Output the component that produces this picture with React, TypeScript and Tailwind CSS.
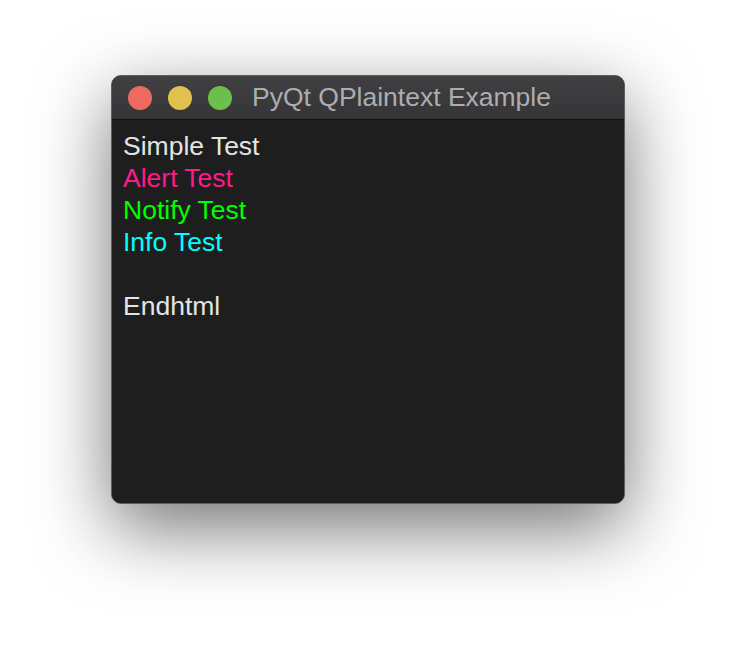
import React from "react";

const lines = [
  { text: "Simple Test", color: "text-[#e4e4e4]" },
  { text: "Alert Test", color: "text-[#ff1a8c]" },
  { text: "Notify Test", color: "text-[#00ff00]" },
  { text: "Info Test", color: "text-[#00ffff]" },
  { text: "\u00a0", color: "text-[#e4e4e4]" },
  { text: "Endhtml", color: "text-[#e4e4e4]" },
];

const App = () => {
  return (
    <div className="w-[736px] h-[652px] bg-white pt-[75px] pl-[111px] font-['Liberation_Sans',Arial,sans-serif] overflow-hidden">
      <div className="w-[514px] h-[429px] rounded-[10px] border border-[#5e5e60] bg-[#1e1e1e] shadow-[0_24px_75px_rgba(0,0,0,0.55)] overflow-hidden flex flex-col">
        <header className="h-[44px] shrink-0 flex items-center bg-gradient-to-b from-[#404042] to-[#353537] border-b border-[#0f0f0f] pl-[16px]">
          <div className="flex gap-[16px]">
            <span className="w-[24px] h-[24px] rounded-full bg-[#ee6a5f]" />
            <span className="w-[24px] h-[24px] rounded-full bg-[#e2c04d]" />
            <span className="w-[24px] h-[24px] rounded-full bg-[#6bc04b]" />
          </div>
          <span className="ml-[20px] text-[26.5px] leading-none text-[#adadaf]">
            PyQt QPlaintext Example
          </span>
        </header>
        <main className="flex-1 pt-[10px] pl-[11px] bg-[#1e1e1e]">
          {lines.map((l, i) => (
            <div key={i} className={`text-[26.5px] leading-[32px] ${l.color}`}>
              {l.text}
            </div>
          ))}
        </main>
      </div>
    </div>
  );
};

export default App;
